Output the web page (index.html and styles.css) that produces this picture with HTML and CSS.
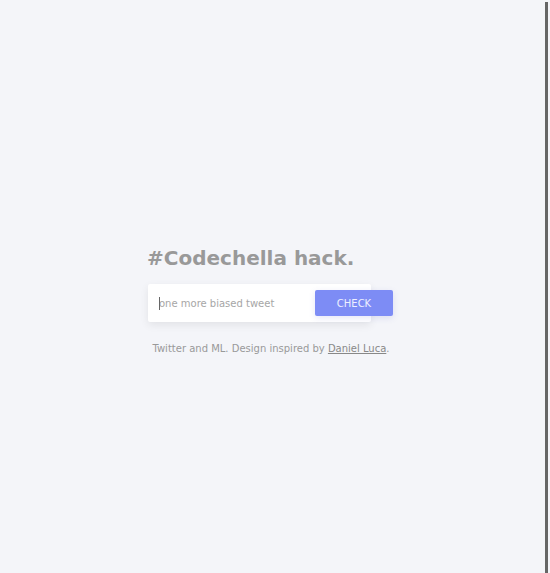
FILE: index.html
```html
<!DOCTYPE html>
<html lang="en">
<head>
<meta charset="utf-8">
<title>#Codechella hack.</title>
<link rel="stylesheet" href="styles.css">
</head>
<body>
<div class="frame">
  <main class="main">
    <div class="block">
      <h1 class="title">#Codechella hack.</h1>
      <form class="form">
        <div class="field">
          <span class="caret"></span>
          <input class="input" type="text" placeholder="one more biased tweet">
        </div>
        <button class="btn" type="button">CHECK</button>
      </form>
      <p class="footer">Twitter and ML. Design inspired by <a class="link" href="#">Daniel Luca</a>.</p>
    </div>
  </main>
  <div class="bar"></div>
</div>
</body>
</html>
```
FILE: styles.css
```css
html, body {
  margin: 0;
  padding: 0;
  background: #f4f5f9;
}
body {
  font-family: "DejaVu Sans", sans-serif;
}
.frame {
  display: flex;
  width: 550px;
  height: 573px;
}
.main {
  width: 541px;
  padding-right: 4px;
  display: flex;
  justify-content: center;
}
.block {
  width: 245px;
  padding-top: 245px;
  display: flex;
  flex-direction: column;
}
.title {
  margin: 0 0 0 -1px;
  font-size: 20px;
  line-height: 26px;
  font-weight: bold;
  color: #999;
}
.form {
  margin: 13px 0 0 0;
  display: flex;
  align-items: center;
}
.field {
  position: relative;
  width: 223px;
  height: 38px;
  background: #fff;
  border-radius: 2px;
  box-shadow: 0 3px 8px rgba(0, 0, 0, 0.08);
  display: flex;
  align-items: center;
}
.caret {
  position: absolute;
  left: 11px;
  top: 13px;
  width: 1px;
  height: 13px;
  background: #666;
}
.input {
  border: 0;
  outline: 0;
  background: transparent;
  padding: 0 0 0 11px;
  width: 150px;
  font-family: "DejaVu Sans", sans-serif;
  font-size: 10px;
  color: #555;
}
.input::placeholder {
  color: #a6a6a6;
}
.btn {
  margin-left: -56px;
  width: 78px;
  height: 26px;
  border: 0;
  border-radius: 2px;
  background: #7d8cf5;
  color: #eef0ff;
  font-family: "DejaVu Sans", sans-serif;
  font-size: 10px;
  box-shadow: 0 2px 6px rgba(80, 90, 200, 0.15);
  padding: 0;
  position: relative;
}
.footer {
  margin: 20px 0 0 0;
  padding-left: 1px;
  text-align: center;
  font-size: 10px;
  line-height: 14px;
  color: #999;
}
.link {
  color: #888;
}
.bar {
  width: 3px;
  margin-top: 2px;
  margin-right: 2px;
  background: #666;
}
```
